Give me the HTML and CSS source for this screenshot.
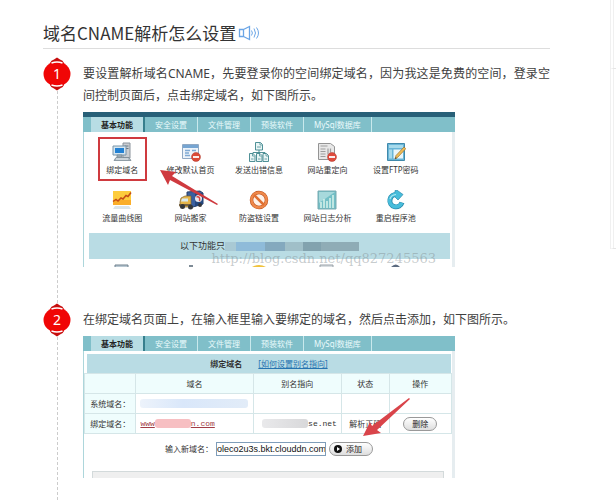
FILE: index.html
```html
<!DOCTYPE html>
<html lang="zh-CN">
<head>
  <meta charset="UTF-8">
  <meta name="viewport" content="width=device-width, initial-scale=1">
  <title>域名CNAME解析怎么设置</title>
  <link rel="stylesheet" href="styles.css">
</head>
<body>
  <main>
    <h1>
      域名CNAME解析怎么设置
      <svg class="speaker" viewBox="0 0 22 16" fill="none" stroke="#6aa5e6" stroke-width="1.3">
        <path d="M1.500 4.500h4v7h-4zM5.500 4.500L11.500 1.500v13L5.500 11.500" />
        <path d="M13.500 5.500q1.800 2.500 0 5M16 3.500q3 4.500 0 9M18.500 2.500q4 5.500 0 11" stroke-width="1" />
      </svg>
    </h1>

    <section class="step">
      <div class="marker">
        <svg class="badge" viewBox="0 0 28 34">
          <path d="M7 6Q8 3 11 2.500L14 .5l3 2q3 .500 4 3.500v22q-1 3-4 3.500l-3 2-3-2Q8 31 7 28z" fill="#c60d0d" />
          <ellipse cx="14" cy="17" rx="13.500" ry="12.500" fill="#f00606" />
          <path d="M8.500 6q5.500-2 11 0M8.500 28q5.500 2 11 0" fill="none" stroke="#fff" stroke-width="1.500" />
          <text x="14" y="22">1</text>
        </svg>
      </div>
      <div class="content">
        <p>要设置解析域名CNAME，先要登录你的空间绑定域名，因为我这是免费的空间，登录空间控制页面后，点击绑定域名，如下图所示。</p>
        <div class="panel features">
          <nav class="tabs">
            <a href="#" class="active">基本功能</a>
            <a href="#">安全设置</a>
            <a href="#">文件管理</a>
            <a href="#">预装软件</a>
            <a href="#">MySql数据库</a>
          </nav>
          <div class="icons">
            <a href="#" class="boxed">
              <svg viewBox="0 0 20 20">
                <path d="M11 1h7v15h-7z" fill="#c9cdd2" stroke="#8b949c" />
                <path d="M12.500 4h4M12.500 6.500h4" stroke="#69747e" />
                <path d="M1 4h13v9H1z" fill="#d5e6f1" stroke="#7994a8" />
                <path d="M3 6h9v5H3z" fill="#2381d3" />
                <path d="M5 13h5v2H5zM4 15.500h13l2 3H2z" fill="#aeb9c1" stroke="#71818d" stroke-width=".7" />
                <path d="M4 17h12" stroke="#e7edf1" />
              </svg>
              <span>绑定域名</span>
            </a>
            <a href="#">
              <svg viewBox="0 0 20 20">
                <path d="M1.500 2.500h16v14h-16z" fill="#eef4fa" stroke="#90a9c4" />
                <path d="M2 3h15v3H2z" fill="#76a5d2" />
                <path d="M4 8.500h5M4 11h4M4 13.500h5M11 8.500h4" stroke="#7fa9d4" stroke-width="1.500" />
                <circle cx="15" cy="15" r="4.500" fill="#dc4a36" stroke="#ac3f32" stroke-width=".5" />
                <path d="M12 15h6" stroke="#fff" stroke-width="1.800" />
              </svg>
              <span>修改默认首页</span>
            </a>
            <a href="#">
              <svg viewBox="0 0 20 20" fill="#e9f5f5" stroke="#3d848b" stroke-width=".9">
                <path d="M10 8v4M4 13v-2.500h12V13" fill="none" />
                <path d="M6.500.5h5l2 2V8h-7zM.5 11.500H4l2 2v6H.5zM7.500 11.500H11l2 2v6H7.500zM14 11.500h3.500l2 2v6H14z" />
                <path d="M11 1v2h2M3.500 12v2h2M10.500 12v2h2M17 12v2h2M8 5h4M2 17h2.500M9 17h2.500M15.500 17H18" fill="none" stroke="#5e9ca2" />
              </svg>
              <span>发送出错信息</span>
            </a>
            <a href="#">
              <svg viewBox="0 0 20 20">
                <path d="M1.500 1.500h12l4 3v13h-16z" fill="#e8e8e8" stroke="#949494" />
                <path d="M3.500 4h7M3.500 7h5M3.500 9.500h5M3.500 12h5M3.500 14.500h5M11 6.500v6M13.500 6.500v4" stroke="#9d9d9d" stroke-width="1.200" />
                <circle cx="15" cy="15" r="4.500" fill="#df4a3c" stroke="#ac3f32" stroke-width=".5" />
                <path d="M12 15h6" stroke="#fff" stroke-width="1.800" />
              </svg>
              <span>网站重定向</span>
            </a>
            <a href="#">
              <svg viewBox="0 0 20 20">
                <path d="M1.500 1.500h17v17h-17z" fill="#69b5d7" stroke="#4089ab" />
                <path d="M3 3h14v3H3zM3 7.500h3v9H3z" fill="#a7daeb" />
                <path d="M7.500 7.500H17v9H7.500z" fill="#eaf6fa" />
                <path d="M9 17l1-3.500 8-8.500 1.800 1.700-8 8.500z" fill="#efbd55" stroke="#9e7333" stroke-width=".7" />
                <path d="M9 17l.6-2 1.300 1.200z" fill="#544431" />
              </svg>
              <span>设置FTP密码</span>
            </a>
            <a href="#">
              <svg viewBox="0 0 20 20">
                <path d="M1 1h18v14H1z" fill="#fdcc3d" />
                <path d="M1 10h18v5H1z" fill="#fbae2a" />
                <path d="M1 11.500l3-2 2 1.500 3-3 2 1 3-3.500 2 1L19 2.500" fill="none" stroke="#c44c16" stroke-width="1.500" />
                <path d="M3 16h14l2 3H1z" fill="#dce5ea" />
              </svg>
              <span>流量曲线图</span>
            </a>
            <a href="#">
              <svg viewBox="0 0 26 20">
                <path d="M9 2l13-1 3 2v11l-10 3-6-3z" fill="#3a5f9f" stroke="#293f66" />
                <path d="M17 3l8 0v11l-8 2.500z" fill="#24477f" />
                <circle cx="20.500" cy="8.500" r="3.500" fill="#e7e9f0" />
                <path d="M18.500 7q4-1 3 4" fill="none" stroke="#d44542" stroke-width="1.500" />
                <path d="M3 8l4-2h6v11H2v-5z" fill="#e4b54a" stroke="#7a5e30" stroke-width=".7" />
                <path d="M4 8.500h6v3H3z" fill="#d8eaf1" />
                <path d="M1 14h12v2H1z" fill="#776343" />
                <circle cx="4.500" cy="16.500" r="2.500" fill="#33363a" />
                <circle cx="12.500" cy="17" r="2.500" fill="#33363a" />
                <circle cx="22" cy="15" r="2" fill="#33363a" />
              </svg>
              <span>网站搬家</span>
            </a>
            <a href="#">
              <svg viewBox="0 0 20 20">
                <circle cx="10" cy="10" r="7.500" fill="#fff2e9" stroke="#b94e1b" stroke-width="3.500" />
                <circle cx="10" cy="10" r="7.500" fill="none" stroke="#ef884a" stroke-width="2.500" />
                <path d="M5 5l10 10" stroke="#df6f32" stroke-width="2.500" />
              </svg>
              <span>防盗链设置</span>
            </a>
            <a href="#">
              <svg viewBox="0 0 20 20">
                <path d="M1 1h18v18H1z" fill="#73bfc6" stroke="#78a9b0" />
                <path d="M2 2h16L2 13z" fill="#a7d9dc" />
                <path d="M4 18v-6M7 18V9M10 18v-7M13 18V8M16 18V5" stroke="#d9f3ec" stroke-width="1.500" />
              </svg>
              <span>网站日志分析</span>
            </a>
            <a href="#">
              <svg viewBox="0 0 20 20">
                <path d="M16 12.500a6.200 6.200 0 1 1-5-8" fill="none" stroke="#288aac" stroke-width="5" />
                <path d="M9 .5l2-.3 6 4.300-5 5.500-3-3z" fill="#48bddb" stroke="#288aac" stroke-width=".7" />
                <path d="M15.700 12.800a6.200 6.200 0 1 1-4.700-8.300" fill="none" stroke="#48bddb" stroke-width="3.600" />
                <path d="M4 9q1-4 6-4.500" fill="none" stroke="#aae7f2" stroke-width="1.200" />
              </svg>
              <span>重启程序池</span>
            </a>
          </div>
          <div class="notice">以下功能只<span class="mosaic"></span></div>
          <div class="peek">
            <svg viewBox="0 0 20 3"><path d="M3 3V1h13v2" fill="#b9c8d2" stroke="#71828f" /></svg>
            <svg viewBox="0 0 20 3"><path d="M8 1h4v2H8z" fill="#7e8b96" /></svg>
            <svg viewBox="0 0 20 3"><path d="M3 3q7-4 14 0z" fill="#f0c23d" /></svg>
            <svg viewBox="0 0 20 3"><path d="M3 3V1h13v2" fill="#d8dde1" stroke="#98a1a8" /></svg>
            <svg viewBox="0 0 20 3"><path d="M5 3q5-5 9 0z" fill="#5c6b80" /></svg>
          </div>
          <svg class="arrow arrow-bind" viewBox="0 0 60 36">
            <path d="M0 0l16 2-4 4 46 28-1 1L10 10l-2 5z" fill="#cf3a3f" />
          </svg>
          <div class="watermark">http://blog.csdn.net/qq827245563</div>
        </div>
      </div>
    </section>

    <section class="step">
      <div class="marker">
        <svg class="badge" viewBox="0 0 28 34">
          <path d="M7 6Q8 3 11 2.500L14 .5l3 2q3 .500 4 3.500v22q-1 3-4 3.500l-3 2-3-2Q8 31 7 28z" fill="#c60d0d" />
          <ellipse cx="14" cy="17" rx="13.500" ry="12.500" fill="#f00606" />
          <path d="M8.500 6q5.500-2 11 0M8.500 28q5.500 2 11 0" fill="none" stroke="#fff" stroke-width="1.500" />
          <text x="14" y="22">2</text>
        </svg>
      </div>
      <div class="content">
        <p>在绑定域名页面上，在输入框里输入要绑定的域名，然后点击添加，如下图所示。</p>
        <div class="panel domains">
          <nav class="tabs">
            <a href="#" class="active">基本功能</a>
            <a href="#">安全设置</a>
            <a href="#">文件管理</a>
            <a href="#">预装软件</a>
            <a href="#">MySql数据库</a>
          </nav>
          <div class="panel-title">
            <b>绑定域名</b>
            <a href="#">[如何设置别名指向]</a>
          </div>
          <table>
            <colgroup>
              <col class="col-label">
              <col class="col-domain">
              <col class="col-alias">
              <col class="col-state">
              <col class="col-action">
            </colgroup>
            <thead>
              <tr>
                <th></th>
                <th>域名</th>
                <th>别名指向</th>
                <th>状态</th>
                <th>操作</th>
              </tr>
            </thead>
            <tbody>
              <tr>
                <th>系统域名：</th>
                <td><span class="smudge smudge-blue"></span></td>
                <td></td>
                <td></td>
                <td></td>
              </tr>
              <tr>
                <th>绑定域名：</th>
                <td><a href="#" class="domain">www<span class="smudge smudge-pink"></span>n.com</a></td>
                <td><div class="alias"><span class="smudge smudge-gray"></span>se.net</div></td>
                <td class="center">解析正确</td>
                <td class="center"><button type="button">删除</button></td>
              </tr>
            </tbody>
          </table>
          <form class="add-form">
            <label for="new-domain">输入新域名：</label>
            <input type="text" id="new-domain" value="oleco2u3s.bkt.clouddn.com">
            <button type="button">
              <svg viewBox="0 0 8 8"><circle cx="4" cy="4" r="4" fill="#111" /><path d="M3 2l3 2-3 2z" fill="#fff" /></svg>
              添加
            </button>
          </form>
          <div class="well"></div>
          <svg class="arrow arrow-add" viewBox="0 0 48 38">
            <path d="M0 38l7-14 2 4L46 0l1 1-33 31 4 3z" fill="#d9444a" />
          </svg>
        </div>
      </div>
    </section>
  </main>
  <aside>
    <div class="side-card"></div>
    <div class="side-card tall"></div>
  </aside>
</body>
</html>
```

FILE: styles.css
```css
* {
  box-sizing: border-box;
}

body {
  margin: 0;
  display: flex;
  min-height: 100vh;
  background: #fff;
  color: #404040;
  font-family: "Noto Sans", "Noto Sans CJK SC", sans-serif;
  font-size: 12px;
}

a {
  color: inherit;
  text-decoration: none;
}

svg {
  display: block;
}

main {
  flex: 1;
  min-width: 0;
  display: flex;
  flex-direction: column;
  padding: 18px 60px 0 43px;
}

h1 {
  display: flex;
  align-items: center;
  gap: 2px;
  margin: 0 0 8px;
  border-bottom: 1px solid #ddd;
  font-family: "Noto Sans CJK SC", sans-serif;
  font-size: 17px;
  font-weight: normal;
  line-height: 30px;
  color: #333;
}

.speaker {
  width: 22px;
  height: 16px;
}

/* Steps */
.step {
  display: grid;
  grid-template-columns: 28px 1fr;
  column-gap: 12px;
}

.step:last-child {
  flex: 1;
}

.marker {
  display: flex;
  flex-direction: column;
  align-items: center;
}

.marker::after {
  content: "";
  flex: 1;
  border-left: 1px dashed #ccc;
}

.badge {
  width: 28px;
  height: 34px;
}

.badge text {
  fill: #fff;
  font-size: 14px;
  text-anchor: middle;
}

.content {
  min-width: 0;
  padding: 6px 0 36px;
}

.step:last-child .content {
  padding-bottom: 20px;
}

.content p {
  margin: 0 0 5px;
  line-height: 22px;
  text-align: justify;
}

/* Control panel */
.panel {
  position: relative;
  max-width: 372px;
  border-left: 1px solid #add6db;
  border-right: 3px solid #e6edf0;
  font-size: 8px;
  line-height: 12px;
  color: #333;
}

.tabs {
  display: flex;
  height: 15px;
  margin: 0 -3px 0 -1px;
  padding-left: 8px;
  background: #80bfc9;
  line-height: 15px;
  color: #e8fafb;
}

.tabs a {
  padding: 0 10px;
  border-right: 1px solid #c9e9ec;
  white-space: nowrap;
}

.tabs .active {
  background: #b8dde4;
  border-right: 2px solid #367f8d;
  color: #222;
  font-weight: bold;
}

.features .tabs {
  height: 20px;
  border-top: 5px solid #286078;
}

.icons {
  display: grid;
  grid-template-columns: repeat(5, 1fr);
  padding: 4px 22px 1px 4px;
}

.icons a {
  display: flex;
  flex-direction: column;
  align-items: center;
  gap: 2px;
  height: 48px;
  padding-top: 6px;
  white-space: nowrap;
}

.icons svg {
  height: 20px;
}

.icons .boxed {
  width: 49px;
  height: 44px;
  margin: 1px auto 3px;
  padding-top: 3px;
  border: 2px solid #cf3a3f;
}

.notice {
  display: flex;
  align-items: center;
  justify-content: center;
  height: 26px;
  margin: 0 2px 0 5px;
  background: #b9dce4;
  font-size: 9px;
}

.mosaic {
  width: 134px;
  height: 9px;
  background: linear-gradient(90deg, #a9c9d4 0 8%, #8fbbd9 8% 30%, #84a9be 30% 45%, #a0bfc8 45% 58%, #82a2ae 58% 72%, #8facb6 72%);
}

.peek {
  display: grid;
  grid-template-columns: repeat(5, 1fr);
  justify-items: center;
  padding: 5px 22px 0 4px;
}

.peek svg {
  width: 20px;
  height: 3px;
}

.arrow {
  position: absolute;
}

.arrow-bind {
  left: 76px;
  top: 58px;
  width: 60px;
  height: 36px;
}

.arrow-add {
  right: 41px;
  top: 62px;
  width: 48px;
  height: 38px;
}

.watermark {
  position: absolute;
  right: 16px;
  bottom: 0;
  font-family: "DejaVu Serif", serif;
  font-size: 13px;
  line-height: 16px;
  color: rgba(130, 140, 145, 0.45);
}

/* Domain table */
.panel-title {
  display: flex;
  justify-content: center;
  gap: 16px;
  margin: 3px 1px 0 3px;
  background: #b9dce4;
  line-height: 19px;
}

.panel-title a {
  color: #2673b0;
  text-decoration: underline;
}

table {
  width: 100%;
  table-layout: fixed;
  border-collapse: collapse;
}

.col-label {
  width: 14%;
}

.col-domain {
  width: 32%;
}

.col-alias {
  width: 24%;
}

.col-state {
  width: 13%;
}

.col-action {
  width: 17%;
}

th,
td {
  height: 20px;
  padding: 0 4px;
  border: 1px solid #d5e6e8;
  font-weight: normal;
}

th {
  background: #effdfd;
}

tbody th {
  padding: 0;
  white-space: nowrap;
}

.center {
  text-align: center;
  white-space: nowrap;
}

.domain {
  display: flex;
  align-items: center;
  color: #a13c46;
  font-family: "Liberation Mono", monospace;
  text-decoration: underline;
}

.alias {
  display: flex;
  align-items: center;
  justify-content: flex-end;
  font-family: "Liberation Mono", monospace;
}

.smudge {
  display: block;
  height: 9px;
  border-radius: 3px;
}

.smudge-blue {
  width: 108px;
  background: linear-gradient(90deg, #edf3fb, #d9e7fa 40%, #e2ecf8);
}

.smudge-pink {
  width: 36px;
  background: #f7bfc2;
}

.smudge-gray {
  width: 46px;
  background: linear-gradient(90deg, #e9e9eb, #d8d8da);
}

button {
  padding: 0 8px;
  height: 14px;
  border: 1px solid #999;
  border-radius: 7px;
  background: linear-gradient(#fff, #dedede);
  color: #222;
  font: inherit;
  line-height: 12px;
  vertical-align: middle;
}

.add-form {
  display: flex;
  align-items: center;
  gap: 3px;
  padding: 8px 0 15px 81px;
}

.add-form input {
  width: 110px;
  height: 14px;
  padding: 0;
  border: 1px solid #7f9db9;
  background: #fff;
  color: #111;
  font-family: "Liberation Sans", sans-serif;
  font-size: 9px;
}

.add-form button {
  display: flex;
  align-items: center;
  gap: 4px;
  padding: 0 10px 0 4px;
}

.add-form button svg {
  width: 8px;
  height: 8px;
}

.well {
  height: 7px;
  margin: 0 8px;
  border: 1px solid #d3dadb;
  border-bottom: 0;
  background: #efefef;
}

/* Side column */
aside {
  display: flex;
  flex-direction: column;
  width: 6px;
}

.side-card {
  height: 69px;
  border-left: 4px double #f0f0f0;
  border-bottom: 1px solid #e5e5e5;
}

.side-card.tall {
  height: 180px;
}
```
